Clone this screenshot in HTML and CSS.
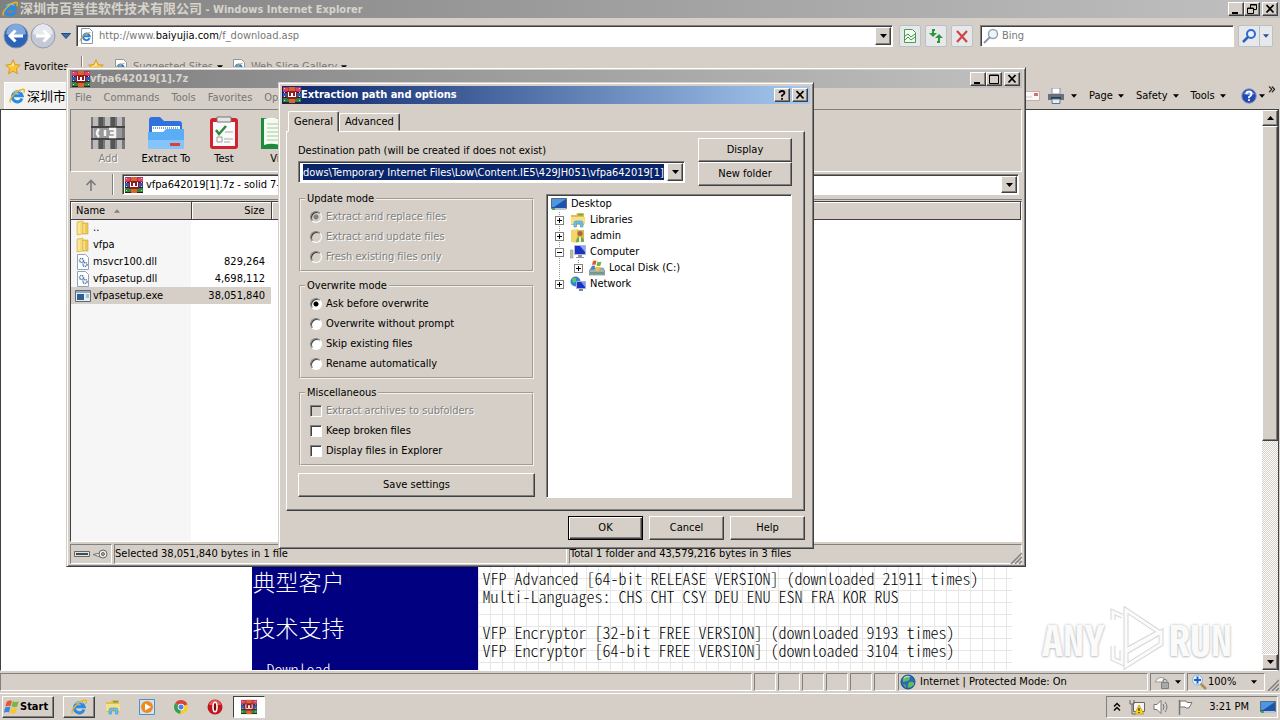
FILE: index.html
```html
<!DOCTYPE html>
<html lang="en">
<head>
    <meta charset="utf-8">
    <title>Desktop</title>
    <link rel="stylesheet" href="styles.css">
</head>
<body>
    <svg class="sprite" aria-hidden="true">
        <symbol id="ie" viewBox="0 0 16 16">
            <path d="M13 10.600A5 5 0 1 1 13.200 7.800H5" fill="none" stroke="#2a8be0" stroke-width="3"/>
            <path d="M4 5A5.500 5.500 0 0 1 12 4.500" fill="none" stroke="#8fd0fa" stroke-width="1"/>
            <path d="M1.500 14.500C-1 11 8 1.500 14.500 1.200c1.500.3.8 2.500.2 3.600" fill="none" stroke="#e9b429" stroke-width="1.400"/>
        </symbol>
        <symbol id="ie-page" viewBox="0 0 16 16">
            <path d="M2.500.5h8l3 3v12h-11z" fill="#fff" stroke="#8a97a8"/>
            <path d="M10.500 10.200a3.300 3.300 0 1 1 .2-2H4.500" fill="none" stroke="#2a7fd8" stroke-width="2"/>
            <path d="M1 13.500c0-3 5-9 10.500-9" fill="none" stroke="#e0aa30"/>
        </symbol>
        <symbol id="rar" viewBox="0 0 18 16">
            <path fill="#a8327c" d="M0 0h18v5H0z"/>
            <path fill="#2f55b8" d="M0 5h18v5H0z"/>
            <path fill="#2c8a3a" d="M0 10h18v6H0z"/>
            <path fill="#3a1420" d="M0 5h18v1H0zM0 10h18v1H0zM0 15h18v1H0z"/>
            <path fill="#e2484e" d="M0 1h5v3H0zM13 1h5v3h-5z"/>
            <path fill="#d96528" d="M6 0h6v16H6z"/>
            <path fill="#8e1c22" d="M4 4h10v8H4z"/>
            <path d="M5 5h1v5H5zM12 5h1v5h-1zM8 6h2v4H8zM5 9h8v1H5z" fill="#fff"/>
            <path d="M1.500 1v14M16.500 1v14" stroke="#e8d5b0" stroke-dasharray="1 3"/>
        </symbol>
        <symbol id="star" viewBox="0 0 16 16">
            <path d="M8 .8l2.100 4.800 5.200.5-3.900 3.500 1.100 5.200L8 12.100l-4.500 2.700 1.100-5.200L.7 6.100l5.200-.5z" fill="#fcc736" stroke="#d99b26"/>
            <path d="M8 3l1.200 3.500-4 1-2-.6 3.500-.5z" fill="#fff0a8"/>
        </symbol>
        <symbol id="folder" viewBox="0 0 16 16">
            <path d="M2 2l6-1v13l-6 1z" fill="#f7dc74" stroke="#d1ad45" stroke-width=".6"/>
            <path d="M8 3h5v11H8z" fill="#eec853" stroke="#c9a23c" stroke-width=".6"/>
            <path d="M4 3v10M9 4v9" stroke="#fff4bd"/>
        </symbol>
        <symbol id="dll" viewBox="0 0 16 16">
            <path d="M2.500.5h8l3 3v12h-11z" fill="#fff" stroke="#94a2b5"/>
            <circle cx="6.500" cy="6.500" r="2" fill="none" stroke="#4d76ab" stroke-width="1.500" stroke-dasharray="1.200 .6"/>
            <circle cx="10" cy="10.500" r="2" fill="none" stroke="#4d76ab" stroke-width="1.500" stroke-dasharray="1.200 .6"/>
        </symbol>
        <symbol id="exe" viewBox="0 0 16 16">
            <path d="M.5 2.500h15v11H.5z" fill="#e8edf3" stroke="#5b6a7a"/>
            <path d="M1 3h14v2H1z" fill="#8fa9c6"/>
            <path d="M2 6h7v6H2z" fill="#2f5f8f"/>
            <path d="M11 7h3M11 9h3" stroke="#7d8b9b"/>
        </symbol>
        <symbol id="monitor" viewBox="0 0 16 16">
            <path d="M.5 2.500h15v10H.5z" fill="#1c55a8" stroke="#596b82"/>
            <path d="M1 3h14L3 11H1z" fill="#4f96e0"/>
            <path d="M1 12h14v2H1z" fill="#b7c3d0"/>
            <path d="M1 12h3v2H1z" fill="#4fa54f"/>
        </symbol>
        <symbol id="explorer" viewBox="0 0 16 16">
            <path d="M1 3h5l1-2h7v12H1z" fill="#e4bd52"/>
            <path d="M1 5h14v7H1z" fill="#f8e08a"/>
            <path d="M8 2h5v1.500H8z" fill="#57a957"/>
            <path d="M4 15V11q0-2 2-2h5q2 0 2 2v4h-2.500v-3.500h-4V15z" fill="#6cc3ea" stroke="#3a94c4" stroke-width=".6"/>
        </symbol>
        <symbol id="user" viewBox="0 0 16 16">
            <path d="M1 2l7-1v14l-7-1z" fill="#f3d56b"/>
            <path d="M7 2h7v12H7z" fill="#dfb64c"/>
            <circle cx="10" cy="5.500" r="2.500" fill="#a7683a"/>
            <path d="M6 14q0-5 4-5t4 5z" fill="#6fa94c"/>
            <path d="M9 9h2v5H9z" fill="#efe7d8"/>
        </symbol>
        <symbol id="computer" viewBox="0 0 16 16">
            <path d="M0 6h3v8H0z" fill="#b9c3ad" stroke="#838d7c" stroke-width=".5"/>
            <path d="M4.500 1.500h11v9h-11z" fill="#1b31c8" stroke="#b2bac8"/>
            <path d="M10 2h5v6z" fill="#8ca4ff"/>
            <path d="M8 11h4v2h2v1H6v-1h2z" fill="#8d97a6"/>
        </symbol>
        <symbol id="disk" viewBox="0 0 16 16">
            <path d="M0 11l2-3h12l2 3v4H0z" fill="#a4b0b4" stroke="#69777d" stroke-width=".6"/>
            <path d="M1 12h14v2H1z" fill="#6f9a8c"/>
            <path d="M4 1q2-1 3.500 0L6.500 5Q5 4 3 5z" fill="#e4532c"/>
            <path d="M8.500 1.500q2 1 4 0l-1 4q-2 1-4 0z" fill="#6fb544"/>
            <path d="M2.700 6q2-1 3.500 0l-1 4q-1.500-1-3.500 0z" fill="#3f86d6"/>
            <path d="M7.200 6.500q2 1 4 0l-1 4q-2 1-4 0z" fill="#f3c22f"/>
        </symbol>
        <symbol id="network" viewBox="0 0 16 16">
            <circle cx="5.500" cy="5.500" r="5" fill="#2f86d4"/>
            <path d="M2 3q3-3 4 0t-3 4zM6 6l3-2v4z" fill="#67c46a"/>
            <path d="M6.500 5.500h9v7h-9z" fill="#1b31c8" stroke="#a5b0c5"/>
            <path d="M11 6h4v5z" fill="#7c96ff"/>
            <path d="M9 13h4v2H9z" fill="#76839a"/>
        </symbol>
        <symbol id="globe" viewBox="0 0 16 16">
            <circle cx="8" cy="8" r="7" fill="#2a68b8" stroke="#1d4a86"/>
            <path d="M3 4q4-4 6-1t-2 4-4 1zM9 8q4-1 5 1t-3 4-3-2zM3 10q3 0 3 4z" fill="#5fbd5b"/>
            <path d="M4 4q3-3 6-1" stroke="#c3e6ff" fill="none"/>
        </symbol>
        <symbol id="flag" viewBox="0 0 18 18">
            <path d="M3 3q3-2 6-1L7.500 8Q5 7 1.500 8.500z" fill="#e8562a"/>
            <path d="M10 2.500q3 1.500 6.500 0L15 8.500q-3 1.500-6.500 0z" fill="#76b843"/>
            <path d="M1.200 9.800q3-2 6-.7l-1.500 6q-3-1-6 .6z" fill="#3e86dc"/>
            <path d="M8.200 9.800q3 1.500 6.500 0l-1.500 6q-3 1.500-6.500 0z" fill="#f6c731"/>
        </symbol>
        <symbol id="down" viewBox="0 0 7 4"><path d="M0 0h7L3.500 4z"/></symbol>
        <symbol id="up" viewBox="0 0 7 4"><path d="M0 4h7L3.500 0z"/></symbol>
        <symbol id="min" viewBox="0 0 12 10"><path d="M2 8h6v2H2z"/></symbol>
        <symbol id="max" viewBox="0 0 12 10"><path d="M1.500 1h9v8.500h-9zM1.500 1.500h9" fill="none" stroke="#000"/></symbol>
        <symbol id="restore" viewBox="0 0 12 10"><path d="M4.500 4V.5h6v5H8M4 1h7M1.500 4h6v5.500h-6zM1 4.500h7" fill="none" stroke="#000"/></symbol>
        <symbol id="close" viewBox="0 0 12 10"><path d="M2.500 1l7 7.500M9.500 1l-7 7.500" stroke="#000" stroke-width="1.800"/></symbol>
    </svg>

    <main class="ie">
        <header class="titlebar inactive">
            <svg class="icon"><use href="#ie"/></svg>
            <h1 class="title"><span class="cjk">深圳市百誉佳软件技术有限公司</span> - Windows Internet Explorer</h1>
            <button class="sys" aria-label="Minimize"><svg><use href="#min"/></svg></button>
            <button class="sys" aria-label="Restore"><svg><use href="#restore"/></svg></button>
            <button class="sys sys-close" aria-label="Close"><svg><use href="#close"/></svg></button>
        </header>

        <nav class="nav">
            <button class="round" aria-label="Back">
                <svg viewBox="0 0 26 26">
                    <circle cx="13" cy="13" r="12" fill="#2c62b8" stroke="#8593a8"/>
                    <path d="M3 11a10 10 0 0 1 20 0q-10 4-20 0z" fill="#7fa8e0"/>
                    <path d="M7 13h13M12.500 7.500L7 13l5.500 5.500" fill="none" stroke="#fff" stroke-width="3"/>
                </svg>
            </button>
            <button class="round" aria-label="Forward">
                <svg viewBox="0 0 26 26">
                    <circle cx="13" cy="13" r="12" fill="#c3cad6" stroke="#929bab"/>
                    <path d="M3 11a10 10 0 0 1 20 0q-10 4-20 0z" fill="#e5e9ef"/>
                    <path d="M6 13h13M13.500 7.500L19 13l-5.500 5.500" fill="none" stroke="#fff" stroke-width="3"/>
                </svg>
            </button>
            <button class="plain recent" aria-label="Recent pages"><svg viewBox="0 0 10 6"><path d="M.5.5h9L5 5.500z" fill="#3c6fae" stroke="#234a7c"/></svg></button>
            <div class="field address">
                <svg class="icon"><use href="#ie-page"/></svg>
                <a class="url" href="#">http://www.<b>baiyujia.com</b>/f_download.asp</a>
                <button class="drop" aria-label="Show address list"><svg><use href="#down"/></svg></button>
            </div>
            <button class="tool" aria-label="Compatibility view">
                <svg viewBox="0 0 16 16"><path d="M2.500 1.500h8l3 3v10h-11z" fill="#f3faf3" stroke="#4d9a56"/><path d="M3 8l3-2 3 3 4-3M3 12l3-3 3 3 4-3" fill="none" stroke="#3f9a4a"/></svg>
            </button>
            <button class="tool" aria-label="Refresh">
                <svg viewBox="0 0 16 16"><path d="M7 2H5v4" fill="none" stroke="#2f9440" stroke-width="2"/><path d="M1 5h8l-4 4z" fill="#2f9440"/><path d="M9 14h2v-4" fill="none" stroke="#2f9440" stroke-width="2"/><path d="M7 10h8l-4-4z" fill="#2f9440"/></svg>
            </button>
            <button class="tool" aria-label="Stop">
                <svg viewBox="0 0 16 16"><path d="M3 3l10 11M13 3L3 14" stroke="#cf4444" stroke-width="2.200"/></svg>
            </button>
            <div class="field search">
                <svg class="icon" viewBox="0 0 16 16"><circle cx="10" cy="6" r="4.500" fill="#eef5fa" stroke="#95a5b2" stroke-width="1.500"/><path d="M7 9l-6 6" stroke="#8b98a4" stroke-width="2"/></svg>
                <input type="text" placeholder="Bing" aria-label="Search">
            </div>
            <div class="go">
                <button aria-label="Search"><svg viewBox="0 0 16 16"><circle cx="10" cy="6" r="4" fill="#e6f0ff" stroke="#2e6bd6" stroke-width="2"/><path d="M7 9l-5 5" stroke="#2e5fc0" stroke-width="2.500"/></svg></button>
                <button class="go-menu" aria-label="Search options"><svg class="arrow"><use href="#down"/></svg></button>
            </div>
        </nav>

        <div class="favbar">
            <button class="plain fav"><svg class="icon"><use href="#star"/></svg>Favorites</button>
            <span class="sep"></span>
            <svg class="icon add-star"><use href="#star"/></svg>
            <a class="fav-link suggested" href="#"><svg class="icon"><use href="#ie-page"/></svg>Suggested Sites <svg class="arrow"><use href="#down"/></svg></a>
            <a class="fav-link" href="#"><svg class="icon"><use href="#ie-page"/></svg>Web Slice Gallery <svg class="arrow"><use href="#down"/></svg></a>
        </div>

        <div class="tabrow">
            <button class="tab-page"><svg class="icon"><use href="#ie"/></svg><span class="cjk">深圳市百</span></button>
            <div class="commands">
                <svg class="icon mail" viewBox="0 0 16 16"><path d="M.5 3.500h15v9H.5z" fill="#fbf7f4" stroke="#c3aeb0"/><path d="M10 5h4v3h-4z" fill="#cf7272"/><path d="M2 9h6" stroke="#d9c9c9"/></svg>
                <button class="plain" aria-label="Print"><svg class="icon" viewBox="0 0 16 16"><path d="M4 0h8v6H4z" fill="#fff" stroke="#8592a0"/><path d="M0 6h16v6H0z" fill="#68727e"/><path d="M3 9h10v2H3z" fill="#303841"/><path d="M4 11h8v4.500H4z" fill="#dbeefa" stroke="#61768a"/></svg><svg class="arrow"><use href="#down"/></svg></button>
                <button class="plain">Page <svg class="arrow"><use href="#down"/></svg></button>
                <button class="plain">Safety <svg class="arrow"><use href="#down"/></svg></button>
                <button class="plain">Tools <svg class="arrow"><use href="#down"/></svg></button>
                <button class="plain help" aria-label="Help"><svg class="icon" viewBox="0 0 16 16"><circle cx="8" cy="8" r="7.300" fill="#2449b4" stroke="#8d9fc8"/><path d="M2.500 6a6 5 0 0 1 11 0q-5 2-11 0z" fill="#7d9be6"/><path d="M5.500 6q0-2.500 2.500-2.500T10.500 6Q10.500 7.500 8 9v1.200M8 11.200V13" fill="none" stroke="#fff" stroke-width="1.800"/></svg><svg class="arrow"><use href="#down"/></svg></button>
                <span class="more">»</span>
            </div>
        </div>

        <section class="viewport">
            <div class="page">
                <div class="site">
                    <div class="side">
                        <a href="#">典型客户</a>
                        <a href="#">技术支持</a>
                        <a class="sub" href="#">Download</a>
                    </div>
                    <div class="downloads">
                        <p>VFP Advanced [64-bit RELEASE VERSION] (downloaded 21911 times)<br>Multi-Languages: CHS CHT CSY DEU ENU ESN FRA KOR RUS</p>
                        <p>VFP Encryptor [32-bit FREE VERSION] (downloaded 9193 times)<br>VFP Encryptor [64-bit FREE VERSION] (downloaded 3104 times)</p>
                    </div>
                </div>
            </div>
            <div class="scrollbar">
                <button aria-label="Scroll up"><svg><use href="#up"/></svg></button>
                <div class="thumb"></div>
                <div class="track"></div>
                <button aria-label="Scroll down"><svg><use href="#down"/></svg></button>
            </div>
            <div class="watermark">
                <span>ANY</span>
                <svg viewBox="0 0 56 64"><path d="M4 14V6l9 4M4 40v13l9 4V44M17 4v40l33-18zM17 60l35-22V26L17 46z" fill="none" stroke="#d6d6d6" stroke-width="5"/><path d="M4 14V6l9 4M4 40v13l9 4V44M17 4v40l33-18zM17 60l35-22V26L17 46z" fill="none" stroke="#fbfbfb" stroke-width="3"/></svg>
                <span>RUN</span>
            </div>
        </section>

        <footer class="ie-status">
            <span class="pane grow"></span>
            <span class="pane small"></span><span class="pane small"></span><span class="pane small"></span>
            <span class="pane small"></span><span class="pane small"></span><span class="pane small"></span>
            <span class="pane zone"><svg class="icon"><use href="#globe"/></svg>Internet | Protected Mode: On</span>
            <span class="pane lock"><svg class="icon" viewBox="0 0 16 16"><path d="M1 8q3-6 9-4l-1 4z" fill="#f5f5f5" stroke="#9a9a9a"/><path d="M7.500 8.500h7v6h-7z" fill="#a9a9a9" stroke="#808080"/><path d="M9 8V6.500q2-2.500 4 0V8" fill="none" stroke="#808080"/></svg><svg class="arrow"><use href="#down"/></svg></span>
            <span class="pane zoom"><svg class="icon" viewBox="0 0 16 16"><path d="M9 9l6 6" stroke="#b58a50" stroke-width="2.500"/><circle cx="6.500" cy="6" r="5" fill="#e7f2fc" stroke="#8db4dc"/><path d="M6.500 2.500v7M3 6h7" stroke="#1d5fc4" stroke-width="2"/></svg>100%<svg class="arrow"><use href="#down"/></svg></span>
            <svg class="grip" viewBox="0 0 12 12"><path d="M1 12L12 1M5 12l7-7M9 12l3-3" stroke="#808080" stroke-width="1.500"/></svg>
        </footer>
    </main>

    <footer class="taskbar">
        <button class="start"><svg class="icon"><use href="#flag"/></svg>Start</button>
        <button class="task open" aria-label="Internet Explorer"><svg class="icon"><use href="#ie"/></svg></button>
        <button class="task" aria-label="Windows Explorer"><svg class="icon"><use href="#explorer"/></svg></button>
        <button class="task" aria-label="Media Player"><svg class="icon" viewBox="0 0 16 16"><path d="M.5.5h15v15H.5z" fill="#cfe4f6" stroke="#4d8fcb"/><circle cx="8" cy="8" r="6" fill="#f08a1c"/><path d="M6 4.500v7L12 8z" fill="#fff"/></svg></button>
        <button class="task" aria-label="Chrome"><svg class="icon" viewBox="0 0 16 16"><path d="M8 8L2 4.500a7 7 0 0 1 12.500 1z" fill="#dc4437"/><path d="M8 8L2 4.500A7 7 0 0 0 7.500 15z" fill="#2fa150"/><path d="M8 8l6.500-2.500A7 7 0 0 1 7.500 15z" fill="#f9cd2e"/><circle cx="8" cy="8" r="3.300" fill="#fff"/><circle cx="8" cy="8" r="2.500" fill="#4683e6"/></svg></button>
        <button class="task" aria-label="Opera"><svg class="icon" viewBox="0 0 16 16"><circle cx="8" cy="8" r="7.500" fill="#c3161c"/><path d="M2 6a6 5 0 0 1 12 0z" fill="#e4585c"/><ellipse cx="8" cy="8" rx="2" ry="4.800" fill="#7c0a10" stroke="#fff" stroke-width="1.600"/></svg></button>
        <button class="task pressed" aria-label="WinRAR"><svg class="icon"><use href="#rar"/></svg></button>
        <div class="tray">
            <svg class="chev" viewBox="0 0 8 10"><path d="M1 4.500L4 1.500l3 3M1 8.500l3-3 3 3" fill="none" stroke="#000" stroke-width="1.400"/></svg>
            <svg class="icon" viewBox="0 0 16 16"><path d="M4.500 3.500h11v9h-11z" fill="#f4f4f4" stroke="#666"/><path d="M1 1v4h4V1M3 5v10h4" fill="none" stroke="#666"/><path d="M10 6l5 9H5.500z" fill="#fbd21f" stroke="#a98a12" stroke-width=".6"/><path d="M10 9v3M10 13v1" stroke="#000"/></svg>
            <svg class="icon" viewBox="0 0 16 16"><path d="M1 5.500h3l4-4v13l-4-4H1z" fill="#fff" stroke="#777"/><path d="M10 5q2 3 0 6M12 3q4 5 0 10" fill="none" stroke="#777"/></svg>
            <svg class="icon" viewBox="0 0 16 16"><path d="M2.500 1v15" stroke="#777" stroke-width="1.500"/><path d="M3 2h6l1 1.500h5L12 9H9L8 8H3z" fill="#fff" stroke="#777"/></svg>
            <span class="clock">3:21 PM</span>
            <svg class="icon"><use href="#monitor"/></svg>
        </div>
    </footer>

    <section class="window rar-window">
        <header class="titlebar inactive">
            <svg class="icon rar-icon"><use href="#rar"/></svg>
            <h2 class="title">vfpa642019[1].7z</h2>
            <button class="sys" aria-label="Minimize"><svg><use href="#min"/></svg></button>
            <button class="sys" aria-label="Maximize"><svg><use href="#max"/></svg></button>
            <button class="sys sys-close" aria-label="Close"><svg><use href="#close"/></svg></button>
        </header>
        <div class="menubar">
            <span>File</span><span>Commands</span><span>Tools</span><span>Favorites</span><span>Options</span>
        </div>
        <div class="toolbar">
            <button class="big off">
                <svg viewBox="0 0 34 34"><path d="M0 1h34v32H0z" fill="#777"/><path d="M2 1h5v32H2zM14 1h5v32h-5zM26 1h5v32h-5z" fill="#bbb"/><path d="M8 1h4v32H8zM20 1h4v32h-4z" fill="#555"/><path d="M0 10h34v2H0zM0 22h34v2H0z" fill="#444"/><path d="M3 12h28v10H3z" fill="#999"/><path d="M8 13q-4 4 0 8M14 14v6M18 13h6v8h-6M19 17h5" fill="none" stroke="#f4f4f4" stroke-width="2.500"/></svg>
                Add
            </button>
            <button class="big">
                <svg viewBox="0 0 36 34"><path d="M1 4q0-3 3-3h8l4 4h15q3 0 3 3v18H1z" fill="#2f72de"/><path d="M4 10h28v12H4z" fill="#fff"/><path d="M5 12h26" stroke="#7aa7d8" stroke-width="2" stroke-dasharray="1 1"/><path d="M0 16h15l3-3h18v17q0 3-3 3H3q-3 0-3-3z" fill="#5badf6"/><path d="M0 24h36v6q0 3-3 3H3q-3 0-3-3z" fill="#83c5fb"/><path d="M22 27h10v3H22z" fill="#d8403c"/></svg>
                Extract To
            </button>
            <button class="big">
                <svg viewBox="0 0 30 34"><rect x="1" y="2" width="28" height="31" rx="3" fill="#d0222f"/><path d="M4 6h22v24H4z" fill="#fafafa"/><path d="M8 1h14v5H8z" fill="#e5e5e5" stroke="#777"/><path d="M7 14l3 4 7-8" fill="none" stroke="#2d8a3f" stroke-width="2.500"/><path d="M8 21h5v5H8z" fill="none" stroke="#999"/><path d="M16 16h8M15 23h9M15 26h6" stroke="#aaa"/></svg>
                Test
            </button>
            <button class="big">
                <svg viewBox="0 0 42 34"><path d="M0 2h42v31H0z" fill="#1d8a3c"/><path d="M3 3q9-3 18 1 9-4 18-1v26q-9-3-18 1-9-4-18-1z" fill="#f4fbf0"/><path d="M6 8h12M6 12h12M6 16h12M6 20h12M6 24h12" stroke="#a6c9a2"/></svg>
                View
            </button>
        </div>
        <div class="pathbar">
            <button class="plain up" aria-label="Up one level"><svg viewBox="0 0 12 12"><path d="M6 12V1.500M1.500 6L6 1.500 10.500 6" fill="none" stroke="#7a7a7a" stroke-width="1.600"/></svg></button>
            <span class="sep"></span>
            <div class="field path">
                <svg class="icon rar-icon"><use href="#rar"/></svg>
                <select aria-label="Path"><option>vfpa642019[1].7z - solid 7-Zip archive</option></select>
                <button class="drop" aria-label="Show list"><svg><use href="#down"/></svg></button>
            </div>
        </div>
        <div class="list">
            <table>
                <thead>
                    <tr><th class="name">Name <svg class="arrow sort"><use href="#up"/></svg></th><th class="size">Size</th><th></th></tr>
                </thead>
                <tbody>
                    <tr><td class="name"><svg class="icon"><use href="#folder"/></svg>..</td><td class="size"></td><td></td></tr>
                    <tr><td class="name"><svg class="icon"><use href="#folder"/></svg>vfpa</td><td class="size"></td><td></td></tr>
                    <tr><td class="name"><svg class="icon"><use href="#dll"/></svg>msvcr100.dll</td><td class="size">829,264</td><td></td></tr>
                    <tr><td class="name"><svg class="icon"><use href="#dll"/></svg>vfpasetup.dll</td><td class="size">4,698,112</td><td></td></tr>
                    <tr class="picked"><td class="name"><svg class="icon"><use href="#exe"/></svg>vfpasetup.exe</td><td class="size">38,051,840</td><td class="blank"></td></tr>
                    <tr class="rest"><td class="name"></td><td></td><td></td></tr>
                </tbody>
            </table>
        </div>
        <footer class="rar-status">
            <span class="pane keys">
                <svg viewBox="0 0 16 12"><path d="M.5 3.500h15v5H.5z" fill="#dfe3e4" stroke="#666"/><path d="M2 5h12v2H2z" fill="#3c4c50"/></svg>
                <svg viewBox="0 0 16 12"><path d="M1 6.500L8 5v4z" fill="#eee" stroke="#777"/><circle cx="11" cy="6" r="4" fill="#eee" stroke="#666"/><circle cx="11" cy="6" r="1.500" fill="#aaa" stroke="#666"/></svg>
            </span>
            <span class="pane half">Selected 38,051,840 bytes in 1 file</span>
            <span class="pane half">Total 1 folder and 43,579,216 bytes in 3 files</span>
            <svg class="grip" viewBox="0 0 12 12"><path d="M1 12L12 1M5 12l7-7M9 12l3-3" stroke="#808080" stroke-width="1.500"/></svg>
        </footer>
    </section>

    <form class="window dialog">
        <header class="titlebar">
            <svg class="icon rar-icon"><use href="#rar"/></svg>
            <h2 class="title">Extraction path and options</h2>
            <button type="button" class="sys" aria-label="Help"><svg viewBox="0 0 12 10"><path d="M3.500 3q0-2 2.500-2t2.500 2Q8.500 4 6 5.500v1.200M6 8v1.800" fill="none" stroke="#000" stroke-width="1.800"/></svg></button>
            <button type="button" class="sys sys-close" aria-label="Close"><svg><use href="#close"/></svg></button>
        </header>
        <div class="tabs">
            <button type="button" class="tab active">General</button>
            <button type="button" class="tab">Advanced</button>
        </div>
        <div class="sheet">
            <div class="top">
                <div class="dest">
                    <label for="dest">Destination path (will be created if does not exist)</label>
                    <div class="field">
                        <input class="dest-input" id="dest" type="text" value="dows\Temporary Internet Files\Low\Content.IE5\429JH051\vfpa642019[1]">
                        <button type="button" class="drop" aria-label="Show list"><svg><use href="#down"/></svg></button>
                    </div>
                </div>
                <div class="top-buttons">
                    <button type="button" class="btn">Display</button>
                    <button type="button" class="btn">New folder</button>
                </div>
            </div>
            <div class="body">
                <div class="options">
                    <fieldset class="off">
                        <legend>Update mode</legend>
                        <label><input type="radio" name="update" checked disabled>Extract and replace files</label>
                        <label><input type="radio" name="update" disabled>Extract and update files</label>
                        <label><input type="radio" name="update" disabled>Fresh existing files only</label>
                    </fieldset>
                    <fieldset>
                        <legend>Overwrite mode</legend>
                        <label><input type="radio" name="overwrite" checked>Ask before overwrite</label>
                        <label><input type="radio" name="overwrite">Overwrite without prompt</label>
                        <label><input type="radio" name="overwrite">Skip existing files</label>
                        <label><input type="radio" name="overwrite">Rename automatically</label>
                    </fieldset>
                    <fieldset>
                        <legend>Miscellaneous</legend>
                        <label class="off"><input type="checkbox" disabled>Extract archives to subfolders</label>
                        <label><input type="checkbox">Keep broken files</label>
                        <label><input type="checkbox">Display files in Explorer</label>
                    </fieldset>
                    <button type="button" class="btn">Save settings</button>
                </div>
                <div class="tree">
                    <div class="node"><svg class="icon"><use href="#monitor"/></svg>Desktop</div>
                    <ul>
                        <li><div class="node"><span class="exp"></span><svg class="icon"><use href="#explorer"/></svg>Libraries</div></li>
                        <li><div class="node"><span class="exp"></span><svg class="icon"><use href="#user"/></svg>admin</div></li>
                        <li>
                            <div class="node"><span class="exp minus"></span><svg class="icon"><use href="#computer"/></svg>Computer</div>
                            <ul>
                                <li><div class="node"><span class="exp"></span><svg class="icon"><use href="#disk"/></svg>Local Disk (C:)</div></li>
                            </ul>
                        </li>
                        <li><div class="node"><span class="exp"></span><svg class="icon"><use href="#network"/></svg>Network</div></li>
                    </ul>
                </div>
            </div>
        </div>
        <div class="actions">
            <button type="button" class="btn default">OK</button>
            <button type="button" class="btn">Cancel</button>
            <button type="button" class="btn">Help</button>
        </div>
    </form>
</body>
</html>
```
FILE: styles.css
```css
:root {
    --face: #d5cfc7;
    --shade: #808080;
    --dark: #404040;
}

* {
    box-sizing: border-box;
}

body {
    margin: 0;
    height: 100vh;
    display: flex;
    flex-direction: column;
    overflow: hidden;
    background: var(--face);
    color: #000;
    font: 11px/14px "DejaVu Sans Condensed", "Noto Sans CJK SC", sans-serif;
}

button, input, select {
    margin: 0;
    padding: 0;
    border: 0;
    border-radius: 0;
    background: none;
    color: inherit;
    font: inherit;
}

svg {
    display: block;
    flex: none;
}

.sprite {
    position: absolute;
    width: 0;
    height: 0;
}

.icon {
    width: 16px;
    height: 16px;
}

.rar-icon {
    width: 18px;
}

.arrow {
    display: inline-block;
    width: 6px;
    height: 4px;
}

.cjk {
    font-family: "Noto Sans CJK SC", sans-serif;
    font-size: 13px;
}

.plain {
    display: flex;
    align-items: center;
    gap: 4px;
}

.sep {
    width: 2px;
    border-left: 1px solid var(--shade);
    border-right: 1px solid #fff;
}

/* shared bevels */
.sys, .drop, .btn, .start, .task.open, .scrollbar button, .thumb {
    background: var(--face);
    border: 1px solid;
    border-color: #fff var(--dark) var(--dark) #fff;
    box-shadow: inset -1px -1px var(--shade);
}

.field {
    display: flex;
    align-items: center;
    background: #fff;
    border: 1px solid;
    border-color: var(--shade) #fff #fff var(--shade);
    box-shadow: inset 1px 1px var(--dark);
}

.pane {
    display: flex;
    align-items: center;
    border: 1px solid;
    border-color: var(--shade) #fff #fff var(--shade);
    white-space: nowrap;
}

.drop {
    align-self: stretch;
    flex: none;
    width: 16px;
    margin: 1px;
    display: flex;
    align-items: center;
    justify-content: center;
}

.drop svg, .scrollbar svg {
    width: 7px;
    height: 4px;
}

.titlebar {
    flex: none;
    display: flex;
    align-items: center;
    height: 18px;
    padding: 0 2px;
    background: linear-gradient(90deg, #0a246a, #a6caf0);
    color: #fff;
}

.titlebar.inactive {
    background: linear-gradient(90deg, #808080, #c0c0c0);
    color: #d8d4cc;
}

.title {
    flex: 1;
    margin: 0;
    font-size: 11px;
    line-height: 18px;
    white-space: nowrap;
}

.sys {
    display: flex;
    align-items: center;
    justify-content: center;
    width: 16px;
    height: 14px;
}

.sys svg {
    width: 12px;
    height: 10px;
}

.sys-close {
    margin-left: 2px;
}

/* browser */
.ie {
    flex: 1;
    min-height: 0;
    display: flex;
    flex-direction: column;
}

.ie > .titlebar .icon {
    margin-right: 2px;
}

.nav {
    display: flex;
    align-items: center;
    height: 35px;
    padding: 0 7px 0 3px;
}

.round, .round svg {
    width: 26px;
    height: 26px;
}

.round + .round {
    margin-left: 1px;
}

.recent {
    width: 20px;
    justify-content: center;
}

.recent svg {
    width: 10px;
    height: 6px;
}

.address {
    flex: 1;
    height: 22px;
    margin-right: 6px;
    padding-left: 2px;
}

.url {
    flex: 1;
    margin-left: 4px;
    color: #777;
    text-decoration: none;
}

.url b {
    color: #000;
    font-weight: normal;
}

.tool, .go {
    height: 22px;
    border: 1px solid #b8c0ca;
    border-radius: 2px;
    background: #e6e8ea;
}

.tool {
    display: flex;
    align-items: center;
    justify-content: center;
    width: 22px;
    margin-right: 4px;
}

.tool svg, .go svg {
    width: 16px;
    height: 16px;
}

.search {
    width: 254px;
    height: 22px;
    margin: 0 4px 0 3px;
    padding-left: 2px;
}

.search input {
    flex: 1;
    min-width: 0;
    margin-left: 3px;
}

.search input::placeholder {
    color: #777;
    opacity: 1;
}

.go {
    display: flex;
}

.go button {
    display: flex;
    align-items: center;
    justify-content: center;
    width: 20px;
}

.go .go-menu {
    width: 13px;
    border-left: 1px solid #b8c0ca;
    fill: #234f9c;
}

.go .arrow {
    width: 6px;
    height: 4px;
}

.favbar {
    display: flex;
    align-items: center;
    height: 27px;
    padding-left: 5px;
}

.fav {
    width: 76px;
    gap: 3px;
    overflow: hidden;
}

.favbar .sep {
    height: 22px;
}

.add-star {
    margin: 0 17px 0 5px;
}

.fav-link {
    display: flex;
    align-items: center;
    gap: 4px;
    margin-left: -8px;
    color: #777;
    text-decoration: none;
}

.suggested {
    margin-right: 16px;
}

.fav-link .arrow {
    fill: #000;
}

.tabrow {
    display: flex;
    align-items: stretch;
    justify-content: space-between;
    height: 29px;
    padding: 2px 4px 0 4px;
}

.tab-page {
    display: flex;
    align-items: center;
    gap: 2px;
    padding: 0 4px;
    border: 1px solid #fff;
    border-bottom: 0;
    background: #f4f3f1;
}

.commands {
    display: flex;
    align-items: center;
    gap: 12px;
}

.commands .plain {
    gap: 5px;
}

.commands .mail {
    margin-right: -4px;
}

.commands .icon + .arrow {
    margin-left: 2px;
}

.commands .help {
    gap: 0;
    margin-left: 3px;
    margin-right: -9px;
}

.more {
    align-self: flex-start;
    font-size: 15px;
}

.viewport {
    flex: 1;
    min-height: 0;
    position: relative;
    display: flex;
    margin-right: 1px;
    border: 1px solid var(--dark);
    border-bottom-color: #fff;
    background: #fff;
}

.page {
    flex: 1;
    overflow: hidden;
}

.site {
    display: flex;
    width: 760px;
    height: 100%;
    margin: 0 auto;
    font-family: "Noto Sans CJK SC", sans-serif;
    font-weight: 300;
}

.side {
    width: 226px;
    padding: 454px 1px 0;
    background: #000080;
}

.side a {
    display: block;
    color: #fff;
    font-size: 23px;
    line-height: 34px;
    margin-bottom: 12px;
    text-decoration: none;
}

.side .sub {
    margin: 16px 0 0 14px;
    font-size: 16px;
    line-height: 18px;
    font-feature-settings: "hwid";
}

.downloads {
    flex: 1;
    padding: 459px 5px 0;
    background:
        repeating-linear-gradient(90deg, #e6e6e6 0 1px, transparent 1px 12px),
        repeating-linear-gradient(#e6e6e6 0 1px, transparent 1px 12px);
    font-size: 16px;
    line-height: 18px;
    font-feature-settings: "hwid";
    white-space: nowrap;
}

.downloads p {
    margin: 0 0 18px;
}

.scrollbar {
    display: flex;
    flex-direction: column;
    width: 16px;
}

.scrollbar button {
    display: flex;
    align-items: center;
    justify-content: center;
    height: 16px;
}

.thumb {
    flex: 314;
}

.track {
    flex: 214;
    background: repeating-conic-gradient(#fff 0 25%, var(--face) 0 50%) 0 0 / 2px 2px;
}

.watermark {
    position: absolute;
    right: 46px;
    bottom: 0;
    display: flex;
    align-items: center;
    gap: 4px;
    color: #fafafa;
    font: bold 42px/60px "Noto Sans CJK SC", sans-serif;
    font-feature-settings: "hwid";
    text-shadow: 0 0 3px #bbb, 0 1px 2px #ccc;
}

.watermark svg {
    width: 56px;
    height: 64px;
}

.ie-status {
    flex: none;
    display: flex;
    gap: 2px;
    height: 23px;
    padding: 2px 1px 2px 0;
    border-bottom: 1px solid #fff;
}

.grow {
    flex: 1;
}

.small {
    width: 22px;
}

.zone {
    width: 250px;
    gap: 4px;
    padding-left: 1px;
}

.lock {
    width: 35px;
    gap: 5px;
    padding-left: 3px;
}

.zoom {
    width: 78px;
    gap: 1px;
    padding-left: 3px;
}

.zoom .arrow {
    margin-left: 14px;
}

.grip {
    align-self: flex-end;
    width: 12px;
    height: 12px;
}

/* taskbar */
.taskbar {
    flex: none;
    display: flex;
    align-items: center;
    gap: 2px;
    height: 26px;
    padding: 0 2px;
}

.start {
    display: flex;
    align-items: center;
    width: 52px;
    height: 22px;
    margin-right: 7px;
    padding-left: 1px;
    font-weight: bold;
}

.task {
    display: flex;
    align-items: center;
    justify-content: center;
    width: 32px;
    height: 22px;
}

.task.pressed {
    background: #fff;
    border: 1px solid;
    border-color: var(--dark) #fff #fff var(--dark);
}

.tray {
    display: flex;
    align-items: center;
    gap: 8px;
    height: 22px;
    margin-left: auto;
    padding: 0 1px 0 6px;
    border: 1px solid;
    border-color: var(--shade) #fff #fff var(--shade);
}

.chev {
    width: 8px;
    height: 10px;
}

.clock {
    margin: 0 3px 0 8px;
}

/* floating windows */
.window {
    position: absolute;
    display: flex;
    flex-direction: column;
    padding: 2px;
    background: var(--face);
    border: 1px solid;
    border-color: var(--face) var(--dark) var(--dark) var(--face);
    box-shadow: inset 1px 1px #fff, inset -1px -1px var(--shade);
}

.rar-window {
    left: 66px;
    top: 67px;
    width: 960px;
    height: 500px;
    padding: 2px 3px;
}

.menubar {
    display: flex;
    gap: 12px;
    padding: 3px 5px 4px;
    color: #777;
}

.toolbar {
    display: flex;
    height: 63px;
    border: 1px solid;
    border-color: var(--shade) #fff #fff var(--shade);
    padding: 6px 8px 0;
}

.big {
    display: flex;
    flex-direction: column;
    align-items: center;
    gap: 2px;
    width: 58px;
    white-space: nowrap;
}

.big svg {
    width: 36px;
    height: 34px;
}

.big:last-child svg {
    width: 42px;
}

.off {
    color: #808080;
    text-shadow: 1px 1px #fff;
}

.pathbar {
    display: flex;
    height: 28px;
    padding: 2px 3px 4px;
    border-bottom: 1px solid var(--shade);
}

.up {
    width: 36px;
    justify-content: center;
}

.up svg {
    width: 12px;
    height: 12px;
}

.pathbar .sep {
    margin: 0 8px 0 3px;
}

.path {
    flex: 1;
    padding-left: 2px;
}

.path select {
    flex: 1;
    appearance: none;
    margin-left: 3px;
}

.list {
    flex: 1;
    display: flex;
    margin-top: 1px;
    border: 1px solid;
    border-color: var(--dark) #fff #fff var(--dark);
    background: #fff;
}

table {
    width: 100%;
    height: 100%;
    border-collapse: collapse;
    table-layout: fixed;
}

th, td {
    height: 17px;
    padding: 0 2px;
    font-weight: normal;
    text-align: left;
    white-space: nowrap;
    line-height: 15px;
}

th {
    background: var(--face);
    border-right: 1px solid var(--dark);
    border-bottom: 1px solid var(--dark);
    box-shadow: inset 1px 1px #fff;
}

th.name {
    width: 120px;
    padding-left: 5px;
}

th.size {
    width: 80px;
}

th.size, td.size {
    padding-right: 6px;
    text-align: right;
}

td.name {
    background: #f6f6f6;
    padding-left: 2px;
}

td .icon {
    display: inline-block;
    margin: 0 2px;
    vertical-align: middle;
}

.picked td {
    background: var(--face);
}

.picked .blank {
    background: #fff;
}

.rest td {
    height: auto;
}

.sort {
    margin-left: 6px;
    vertical-align: middle;
    fill: #808080;
}

.rar-status {
    display: flex;
    gap: 2px;
    height: 20px;
    margin-top: 2px;
}

.keys {
    width: 42px;
    gap: 2px;
    padding-left: 3px;
}

.keys svg {
    width: 16px;
    height: 12px;
}

.half {
    flex: 1;
}

.rar-status .grip {
    margin-left: -14px;
}

/* extraction dialog */
.dialog {
    left: 278px;
    top: 82px;
    width: 536px;
    height: 467px;
    padding: 3px;
}

.dialog .titlebar {
    padding-left: 1px;
}

.tabs {
    display: flex;
    align-items: flex-end;
    height: 27px;
    padding-left: 6px;
}

.tab {
    height: 18px;
    padding: 0 5px;
    border: 1px solid;
    border-color: #fff var(--dark) transparent #fff;
    border-radius: 2px 2px 0 0;
    box-shadow: inset -1px 0 var(--shade);
}

.tab.active {
    height: 21px;
    margin-bottom: -1px;
    border-bottom-color: var(--face);
    background: var(--face);
    position: relative;
}

.sheet {
    flex: 1;
    display: flex;
    flex-direction: column;
    margin: 0 5px 0 4px;
    padding: 6px 12px 12px 11px;
    border: 1px solid;
    border-color: #fff var(--dark) var(--dark) #fff;
    box-shadow: inset -1px -1px var(--shade);
}

.top {
    display: flex;
    gap: 13px;
    margin-bottom: 6px;
}

.dest {
    flex: 1;
    min-width: 0;
}

.dest label {
    display: block;
    margin: 6px 0 3px;
}

.dest .field {
    height: 22px;
    padding-left: 2px;
}

.dest-input {
    flex: 1;
    min-width: 0;
    height: 16px;
    margin: 0 2px;
    background: #0a246a;
    color: #fff;
}

.top-buttons {
    width: 94px;
    display: flex;
    flex-direction: column;
}

.btn {
    height: 24px;
    text-align: center;
}

.body {
    flex: 1;
    display: flex;
    gap: 11px;
}

.options {
    width: 237px;
    display: flex;
    flex-direction: column;
    gap: 7px;
}

fieldset {
    margin: 0 1px;
    padding: 1px 9px 4px;
    border: 2px groove #f4f0ea;
}

legend {
    padding: 0 2px;
    margin-left: -5px;
    color: #000;
    text-shadow: none;
}

fieldset label {
    display: flex;
    align-items: center;
    gap: 4px;
    height: 19px;
    margin-bottom: 1px;
}

fieldset label:last-child {
    margin-bottom: 0;
}

fieldset input {
    appearance: none;
    flex: none;
    width: 12px;
    height: 12px;
    background: #fff;
    border: 1px solid;
    border-color: var(--shade) #fff #fff var(--shade);
    box-shadow: inset 1px 1px var(--dark);
}

fieldset input:disabled {
    background: var(--face);
}

fieldset input[type="radio"] {
    border-radius: 50%;
}

fieldset input[type="radio"]:checked {
    background: radial-gradient(circle, #000 2px, #fff 3px);
}

fieldset input[type="radio"]:checked:disabled {
    background: radial-gradient(circle, #808080 2px, var(--face) 3px);
}

.tree {
    flex: 1;
    margin-top: 2px;
    padding: 1px 4px;
    background: #fff;
    border: 1px solid;
    border-color: var(--shade) #fff #fff var(--shade);
    box-shadow: inset 1px 1px var(--dark);
}

.tree ul {
    margin: 0;
    padding: 0 0 0 4px;
    list-style: none;
}

.tree li {
    background: repeating-linear-gradient(#999 0 1px, #fff 1px 2px) 4px 0 / 1px 100% no-repeat;
}

.tree li:last-child {
    background-size: 1px 8px;
}

.tree li ul {
    padding-left: 19px;
}

.node {
    display: flex;
    align-items: center;
    gap: 4px;
    height: 16px;
}

.exp {
    width: 9px;
    height: 9px;
    margin-right: 2px;
    border: 1px solid #808080;
    background:
        linear-gradient(#000, #000) center / 5px 1px no-repeat,
        linear-gradient(#000, #000) center / 1px 5px no-repeat,
        #fff;
}

.exp.minus {
    background: linear-gradient(#000, #000) center / 5px 1px no-repeat, #fff;
}

.actions {
    display: flex;
    justify-content: flex-end;
    gap: 6px;
    padding: 5px 5px 5px;
}

.actions .btn {
    width: 75px;
}

.btn.default {
    border-color: #000;
    box-shadow: inset 1px 1px #fff, inset -1px -1px var(--dark), inset -2px -2px var(--shade);
}
```
